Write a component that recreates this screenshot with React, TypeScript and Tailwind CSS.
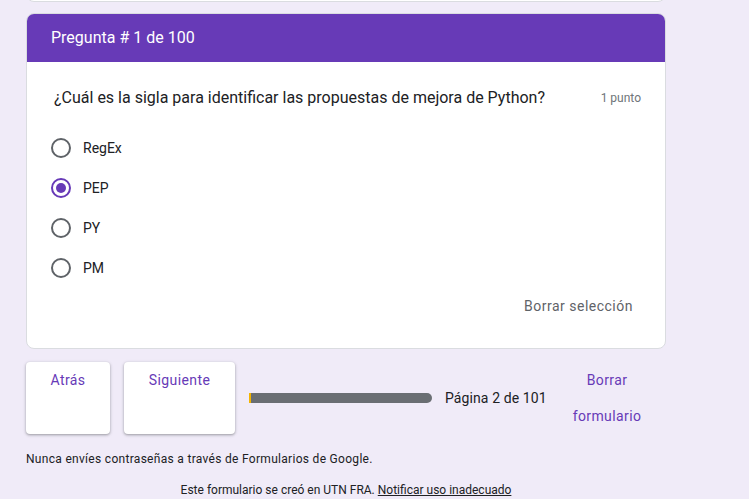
import React, { useState } from 'react';

const options = ['RegEx', 'PEP', 'PY', 'PM'];

function Radio({ checked }: { checked: boolean }) {
    return (
        <div
            className={
                checked
                    ? 'w-[20px] h-[20px] rounded-full border-2 border-[#673ab7] flex items-center justify-center'
                    : 'w-[20px] h-[20px] rounded-full border-2 border-[#5f6368]'
            }
        >
            {checked && <div className="w-[10px] h-[10px] rounded-full bg-[#673ab7]" />}
        </div>
    );
}

export default function App() {
    const [selected, setSelected] = useState('PEP');

    return (
        <div className="min-h-[499px] bg-[#f0ebf8] font-['Roboto',sans-serif] overflow-hidden">
            <div className="w-[640px] ml-[26px]">
                {/* bottom edge of the previous card */}
                <div className="-mt-[38px] h-[40px] rounded-lg bg-white border border-[#dadce0]" />

                <div className="mt-[11px] rounded-lg bg-white border border-[#dadce0] overflow-hidden">
                    <div className="h-[48px] bg-[#673ab7] px-[24px] flex items-center text-white text-[16px]">
                        Pregunta # 1 de 100
                    </div>
                    <div className="px-[24px] pt-[24px] pb-[32px]">
                        <div className="flex items-center justify-between leading-[24px]">
                            <span className="ml-[3px] text-[16px] text-[#202124]">
                                ¿Cuál es la sigla para identificar las propuestas de mejora de Python?
                            </span>
                            <span className="text-[12px] text-[#70757a]">1 punto</span>
                        </div>
                        <div className="mt-[18px]">
                            {options.map((o) => (
                                <div
                                    key={o}
                                    onClick={() => setSelected(o)}
                                    className="h-[40px] flex items-center gap-[12px] cursor-pointer"
                                >
                                    <Radio checked={selected === o} />
                                    <span className="text-[14px] text-[#202124]">{o}</span>
                                </div>
                            ))}
                        </div>
                        <div className="mt-[8px] flex justify-end pr-[8px]">
                            <button
                                onClick={() => setSelected('')}
                                className="text-[14px] leading-[20px] text-[#5f6368] tracking-[0.5px]"
                            >
                                Borrar selección
                            </button>
                        </div>
                    </div>
                </div>

                <div className="mt-[13px] flex items-stretch">
                    <button className="w-[84px] bg-white rounded-[4px] shadow-[0_1px_2px_rgba(60,64,67,0.3),0_1px_3px_1px_rgba(60,64,67,0.15)] leading-[36px] flex justify-center items-start text-[14px] tracking-[0.4px] text-[#673ab7]">
                        Atrás
                    </button>
                    <button className="ml-[14px] w-[111px] bg-white rounded-[4px] shadow-[0_1px_2px_rgba(60,64,67,0.3),0_1px_3px_1px_rgba(60,64,67,0.15)] leading-[36px] flex justify-center items-start text-[14px] tracking-[0.4px] text-[#673ab7]">
                        Siguiente
                    </button>
                    <div className="ml-[14px] flex items-center">
                        <div className="w-[183px] h-[10px] bg-[#6a6e73] rounded-r-full border-l-2 border-[#f4b400]" />
                        <span className="ml-[13px] text-[14px] tracking-[0.1px] text-[#202124]">Página 2 de 101</span>
                    </div>
                    <button className="ml-auto w-[118px] px-[24px] leading-[36px] text-center text-[14px] tracking-[0.4px] text-[#673ab7]">
                        Borrar formulario
                    </button>
                </div>

                <div className="mt-[17px] text-[12px] leading-[16px] tracking-[0.3px] text-[#202124]">
                    Nunca envíes contraseñas a través de Formularios de Google.
                </div>
                <div className="mt-[15px] text-[12px] leading-[16px] text-[#202124] text-center">
                    Este formulario se creó en UTN FRA. <span className="underline">Notificar uso inadecuado</span>
                </div>
            </div>
        </div>
    );
}
